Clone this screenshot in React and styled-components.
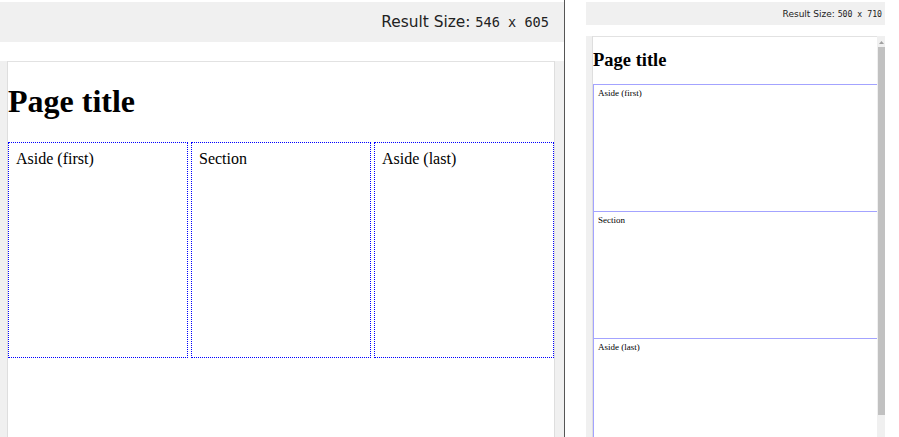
import React from "react";
import styled, { createGlobalStyle } from "styled-components";

const Global = createGlobalStyle`
  html, body { margin: 0; padding: 0; background: #fff; }
  #root { height: 437px; }
`;

const Page = styled.div`
  display: flex;
  height: 437px;
  overflow: hidden;
  background: #fff;
`;

const LeftPane = styled.div`
  width: 564px;
  flex: none;
  display: flex;
  flex-direction: column;
  padding-top: 2px;
  box-sizing: border-box;
`;

const HeaderBar = styled.div`
  height: ${(p) => p.$h}px;
  flex: none;
  background: #f0f0f0;
  display: flex;
  align-items: center;
  justify-content: flex-end;
  padding-right: ${(p) => p.$pr}px;
  color: #222;
  white-space: pre;
`;

const Label = styled.span`
  font-family: "DejaVu Sans", Verdana, sans-serif;
  font-size: ${(p) => p.$size}px;
`;

const Mono = styled.span`
  font-family: "DejaVu Sans Mono", "Liberation Mono", monospace;
  font-size: ${(p) => p.$size}px;
`;

const Frame = styled.div`
  flex: 1;
  display: flex;
  margin-top: ${(p) => p.$mt}px;
  min-height: 0;
`;

const Strip = styled.div`
  width: ${(p) => p.$w}px;
  flex: none;
  background: #f0f0f0;
  border-${(p) => p.$side}: 1px solid #dedede;
`;

const Viewport = styled.div`
  flex: 1;
  min-width: 0;
  border-top: 1px solid #e2e2e2;
  background: #fff;
  font-family: "Liberation Serif", "Times New Roman", serif;
  color: #000;
  overflow: hidden;
`;

const Title = styled.h1`
  font-family: "Liberation Serif", "Times New Roman", serif;
  font-weight: bold;
  font-size: ${(p) => p.$size}px;
  margin: ${(p) => p.$m}px 0;
  line-height: normal;
`;

const Columns = styled.div`
  display: grid;
  grid-template-columns: repeat(3, 180px);
  gap: 3px;
`;

const Column = styled.div`
  height: 216px;
  box-sizing: border-box;
  border: 1px dotted #0000ff;
  padding: 7px;
  font-size: 16px;
`;

const Divider = styled.div`
  width: 1px;
  flex: none;
  background: #555;
`;

const RightPane = styled.div`
  flex: 1;
  display: flex;
  flex-direction: column;
  padding: 2px 14px 0 21px;
  min-width: 0;
`;

const Stack = styled.div`
  display: flex;
  flex-direction: column;
`;

const Block = styled.div`
  height: 127px;
  box-sizing: border-box;
  flex: none;
  border-top: 1px solid #a3a3ff;
  border-left: 1px solid #a3a3ff;
  padding: 3px 4px;
  font-size: 9px;
`;

const Scrollbar = styled.div`
  width: 8px;
  flex: none;
  background: #f0f0f0;
  display: flex;
  flex-direction: column;
  align-items: center;
  padding-top: 2px;
`;

const Arrow = styled.div`
  height: 9px;
  display: flex;
  align-items: center;
  justify-content: center;
`;

const Thumb = styled.div`
  width: 7px;
  height: 368px;
  background: #c1c1c1;
`;

export default function App() {
  return (
    <>
      <Global />
      <Page>
        <LeftPane>
          <HeaderBar $h={40} $pr={15}>
            <Label $size={15.4}>Result Size: </Label>
            <Mono $size={13.6}>546 x 605</Mono>
          </HeaderBar>
          <Frame $mt={19}>
            <Strip $w={7} $side="right" />
            <Viewport>
              <Title $size={32} $m={21.44}>Page title</Title>
              <Columns>
                <Column>Aside (first)</Column>
                <Column>Section</Column>
                <Column>Aside (last)</Column>
              </Columns>
            </Viewport>
            <Strip $w={9} $side="left" />
          </Frame>
        </LeftPane>
        <Divider />
        <RightPane>
          <HeaderBar $h={23} $pr={3}>
            <Label $size={9}>Result Size: </Label>
            <Mono $size={8.2}>500 x 710</Mono>
          </HeaderBar>
          <Frame $mt={11}>
            <Strip $w={6} $side="right" />
            <Viewport>
              <Title $size={18.5} $m={13}>Page title</Title>
              <Stack>
                <Block>Aside (first)</Block>
                <Block>Section</Block>
                <Block>Aside (last)</Block>
              </Stack>
            </Viewport>
            <Scrollbar>
              <Arrow>
                <svg width="5" height="3" viewBox="0 0 5 3">
                  <path d="M0 3 L2.5 0 L5 3 Z" fill="#a0a0a0" />
                </svg>
              </Arrow>
              <Thumb />
            </Scrollbar>
          </Frame>
        </RightPane>
      </Page>
    </>
  );
}
